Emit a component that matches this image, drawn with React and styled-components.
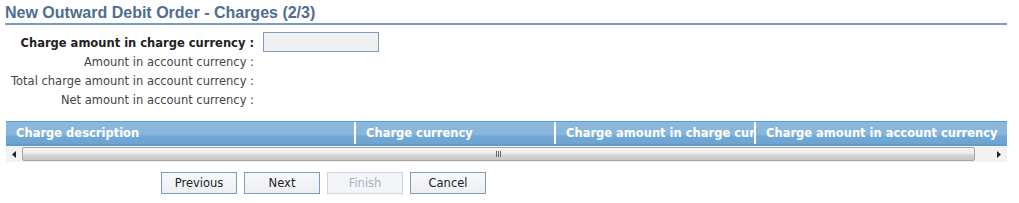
import React from 'react'
import styled, { createGlobalStyle } from 'styled-components'

const Global = createGlobalStyle`
    body{
        margin:0;
        background:#fff;
        font-family: Tahoma, "DejaVu Sans", sans-serif;
        font-size:11.5px;
    }
`

const Page = styled.div`
    padding: 4px 12px 0 5px;
    width: 1002px;
`

const Title = styled.h1`
    margin:0;
    font-family: "Liberation Sans", Arial, sans-serif;
    font-size:16px;
    font-weight:bold;
    color:#4d6d93;
    line-height:18px;
    padding-bottom:1px;
    border-bottom:2px solid #7a9cc0;
`

const Form = styled.div`
    display:grid;
    grid-template-columns: 249px auto;
    column-gap:9px;
    margin-top:7px;
    align-items:center;
`

const Label = styled.div`
    text-align:right;
    color:${p => p.strong ? '#222' : '#444'};
    font-weight:${p => p.strong ? 'bold' : 'normal'};
    line-height:19px;
    padding-top:1px;
    margin-bottom:-1px;
    white-space:nowrap;
`

const Input = styled.div`
    width:114px;
    height:18px;
    border:1px solid #7f9db9;
    background:#f0f0f0;
`

const Grid = styled.div`
    margin:12px 0 0 1px;
    width:1001px;
`

const HeaderRow = styled.div`
    display:flex;
    height:22px;
    border-top:1px solid #5a9bd0;
    border-bottom:2px solid #5a9bd0;
    background:linear-gradient(180deg,#8bb8dc 0%,#88b6db 55%,#72a8d4 65%,#6ca3d1 100%);
`

const HeaderCell = styled.div`
    flex:0 0 ${p => p.w}px;
    box-sizing:border-box;
    padding-left:10px;
    color:#fff;
    font-weight:bold;
    line-height:23px;
    white-space:nowrap;
    overflow:hidden;
    border-right:${p => p.last ? 'none' : '2px solid #fff'};
`

const ScrollBar = styled.div`
    display:flex;
    align-items:center;
    height:16px;
    background:#f2f2f2;
`

const Arrow = styled.div`
    flex:0 0 16px;
    display:flex;
    justify-content:center;
    align-items:center;
`

const Thumb = styled.div`
    flex:1;
    height:14px;
    margin-right:16px;
    box-sizing:border-box;
    border:1px solid #a5a5a5;
    border-radius:2px;
    background:linear-gradient(180deg,#f6f6f6 0%,#ececec 45%,#d8d8d8 55%,#c6c6c6 100%);
    display:flex;
    justify-content:center;
    align-items:center;
`

const Grip = styled.div`
    display:flex;
    gap:1px;
    & span{
        width:1px;
        height:6px;
        background:#666;
    }
`

const Buttons = styled.div`
    display:flex;
    gap:7px;
    margin:10px 0 0 156px;
`

const Button = styled.button`
    box-sizing:border-box;
    width:76px;
    height:22px;
    font-family: Tahoma, "DejaVu Sans", sans-serif;
    font-size:11.5px;
    color:${p => p.disabled ? '#a9b2bd' : '#222'};
    border:1px solid ${p => p.disabled ? '#c9d5e2' : '#7f9db9'};
    background:${p => p.disabled ? '#f4f5f8' : 'linear-gradient(180deg,#f7f8fa 0%,#eceef2 100%)'};
    padding:0;
    cursor:default;
`

const cols = [
    { t: 'Charge description', w: 350 },
    { t: 'Charge currency', w: 200 },
    { t: 'Charge amount in charge currency', w: 200 },
    { t: 'Charge amount in account currency', w: 251, last: true },
]

const App = () => {
    return (
        <Page>
            <Global />
            <Title>New Outward Debit Order - Charges (2/3)</Title>
            <Form>
                <Label strong>Charge amount in charge currency :</Label>
                <Input />
                <Label>Amount in account currency :</Label>
                <div />
                <Label>Total charge amount in account currency :</Label>
                <div />
                <Label>Net amount in account currency :</Label>
                <div />
            </Form>
            <Grid>
                <HeaderRow>
                    {cols.map(c => (
                        <HeaderCell key={c.t} w={c.w} last={c.last}>{c.t}</HeaderCell>
                    ))}
                </HeaderRow>
                <ScrollBar>
                    <Arrow>
                        <svg width="4" height="7" viewBox="0 0 4 7"><path d="M4 0V7L0 3.5Z" fill="#222" /></svg>
                    </Arrow>
                    <Thumb>
                        <Grip><span /><span /><span /></Grip>
                    </Thumb>
                    <Arrow>
                        <svg width="4" height="7" viewBox="0 0 4 7"><path d="M0 0V7L4 3.5Z" fill="#222" /></svg>
                    </Arrow>
                </ScrollBar>
            </Grid>
            <Buttons>
                <Button>Previous</Button>
                <Button>Next</Button>
                <Button disabled>Finish</Button>
                <Button>Cancel</Button>
            </Buttons>
        </Page>
    )
}

export default App
